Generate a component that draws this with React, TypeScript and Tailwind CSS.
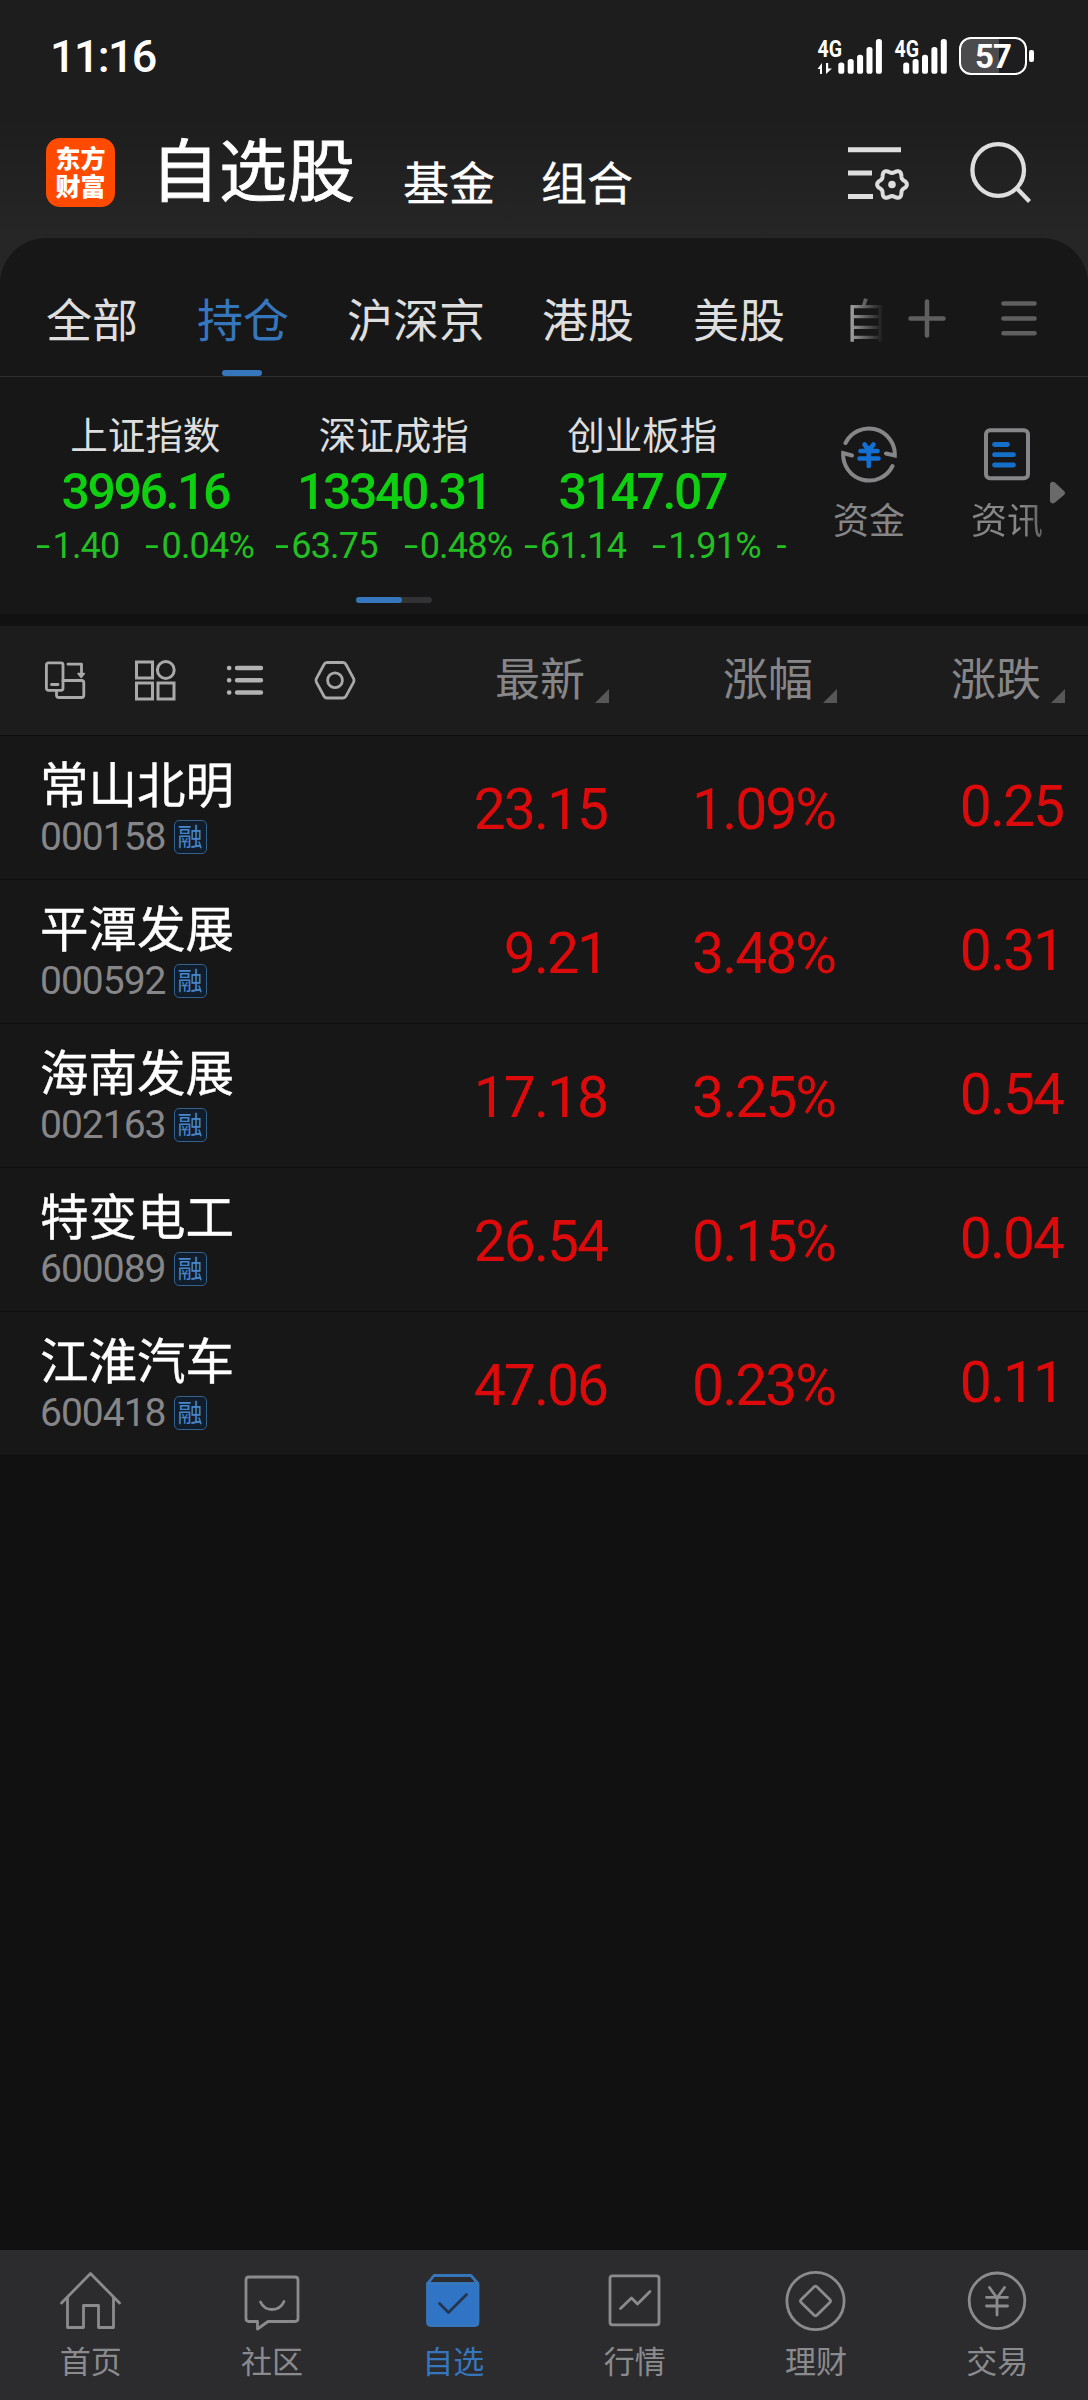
import type { ReactNode } from "react";

const indices = [
  { name: "上证指数", value: "3996.16", change: "1.40", percent: "0.04%" },
  { name: "深证成指", value: "13340.31", change: "63.75", percent: "0.48%" },
  { name: "创业板指", value: "3147.07", change: "61.14", percent: "1.91%" },
];

const stocks = [
  { name: "常山北明", code: "000158", price: "23.15", percent: "1.09%", change: "0.25" },
  { name: "平潭发展", code: "000592", price: "9.21", percent: "3.48%", change: "0.31" },
  { name: "海南发展", code: "002163", price: "17.18", percent: "3.25%", change: "0.54" },
  { name: "特变电工", code: "600089", price: "26.54", percent: "0.15%", change: "0.04" },
  { name: "江淮汽车", code: "600418", price: "47.06", percent: "0.23%", change: "0.11" },
];

// Контур шестерёнки с шестью зубцами
const gearPath =
  Array.from({ length: 72 }, (_, i) => {
    const a = (i / 72) * Math.PI * 2;
    const r = 13.2 + 1.7 * Math.cos(6 * a);
    return `${i ? "L" : "M"}${(46 + r * Math.cos(a)).toFixed(2)} ${(42.5 + r * Math.sin(a)).toFixed(2)}`;
  }).join("") + "Z";

function Signal({ arrows }: { arrows?: boolean }) {
  const start = arrows ? 21.3 : 9.2;
  const tops = [23.5, 20, 15.7, 8, 0];
  return (
    <svg className="overflow-visible" width={arrows ? 64 : 52} height="38" viewBox={arrows ? "0 0 64 38" : "0 0 52 38"} fill="#fff">
      <text x="0.5" y="18" fontSize="23" fontWeight="700" fontFamily="Roboto" textLength="24.5" lengthAdjust="spacingAndGlyphs">
        4G
      </text>
      {arrows && <path d="M0.5 30L5 24V35H3V30ZM9 24H11.2V29.5H15L9 35Z" />}
      {tops.map((top, i) => (
        <rect key={i} x={start + i * 9.4} y={top} width="6" height={34.8 - top} rx="2.6" />
      ))}
    </svg>
  );
}

function StatusBar() {
  return (
    <div className="flex h-[115px] items-start justify-between pl-[50px] pr-[54px] pt-[35px] text-white">
      <div className="text-[45px] font-medium leading-[44px] tracking-[-1.7px]">11:16</div>
      <div className="flex items-start pt-[4px]">
        <Signal arrows />
        <div className="w-[13px]" />
        <Signal />
        <div className="w-[13px]" />
        <div className="-mt-[2px] flex items-center">
          <div className="flex h-[38px] w-[68px] items-center justify-center rounded-[12px] border-[2.5px] border-white bg-[linear-gradient(90deg,#4b4b4d_60%,#1d1d1f_60%)] text-[33px] font-bold leading-none tracking-[-1px]">
            57
          </div>
          <div className="ml-[2px] h-[12px] w-[5px] rounded-[2px] bg-white" />
        </div>
      </div>
    </div>
  );
}

function Header() {
  return (
    <header className="flex h-[123px] items-start bg-gradient-to-b from-[#1d1d1e] to-[#262626] pl-[46px] text-white">
      <div className="mt-[23px] flex h-[69px] w-[69px] flex-none flex-col items-center justify-center rounded-[14px] bg-[#ff4a00] pt-[2px] text-[25px] font-black leading-[28px]">
        <span>东方</span>
        <span>财富</span>
      </div>
      <h1 className="ml-[36px] mt-[20px] w-[204px] flex-none whitespace-nowrap text-[68px] leading-[76px] [-webkit-text-stroke:0.8px_#fff]">自选股</h1>
      <span className="ml-[48px] mt-[41px] flex-none text-[46px] leading-[56px] [-webkit-text-stroke:0.3px_#fff]">基金</span>
      <span className="ml-[46px] mt-[41px] flex-none text-[46px] leading-[56px] [-webkit-text-stroke:0.3px_#fff]">组合</span>
      <svg className="ml-[213px] mt-[27px] flex-none" width="64" height="64" viewBox="0 0 64 64" fill="none" stroke="#dedede">
        <path d="M2 7.7H55M2 31H26M2 54.5H27" strokeWidth="5" />
        <path d={gearPath} strokeWidth="4" strokeLinejoin="round" />
        <circle cx="46" cy="42.5" r="3.8" fill="#dedede" stroke="none" />
      </svg>
      <svg className="ml-[58px] mt-[25px] flex-none" width="64" height="64" viewBox="0 0 64 64" fill="none" stroke="#dedede" strokeWidth="4.3">
        <circle cx="30.2" cy="30" r="25.8" />
        <path d="M48.5 48L61.5 61.5" />
      </svg>
    </header>
  );
}

function Tabs() {
  return (
    <div className="flex h-[139px] items-start border-b border-[#303032] pl-[46px] pt-[54px] text-[46px] leading-[58px] text-[#dedede]">
      <span className="w-[151px]">全部</span>
      <div className="flex w-[150px] flex-col text-[#3676bd]">
        <span>持仓</span>
        <div className="ml-[25px] mt-[20px] h-[6px] w-[40px] rounded-full bg-[#3676bd]" />
      </div>
      <span className="w-[195px]">沪深京</span>
      <span className="w-[151px]">港股</span>
      <span className="w-[150px]">美股</span>
      <span className="w-[46px] bg-gradient-to-r from-[#c4c4c4] to-[#171717] to-90% bg-clip-text text-transparent">自</span>
      <svg className="ml-[17px] mt-[6px]" width="42" height="42" viewBox="0 0 42 42" stroke="#5f5f60" strokeWidth="4.5" strokeLinecap="round">
        <path d="M4.5 20.5H37.5M21 3.5V37.5" />
      </svg>
      <svg className="ml-[50px] mt-[6px]" width="42" height="42" viewBox="0 0 42 42" stroke="#5f5f60" strokeWidth="4.6" strokeLinecap="round">
        <path d="M5.5 5.5H36.5M5.5 20.5H36.5M5.5 35.3H36.5" />
      </svg>
    </div>
  );
}

function Minus() {
  return <span className="inline-block w-[16px] origin-left scale-x-[1.4]">-</span>;
}

function IndexPanel() {
  return (
    <div className="flex h-[237px] items-start">
      <div className="flex w-[790px] flex-col">
        <div className="flex pl-[21px] pt-[33px]">
          {indices.map((item) => (
            <div key={item.name} className="flex w-[248.5px] flex-none flex-col items-center whitespace-nowrap">
              <span className="text-[37.5px] leading-[52px] text-[#dedede]">{item.name}</span>
              <span className="mt-[1px] text-[50px] font-medium leading-[58px] tracking-[-2.4px] text-[#0fd010]">{item.value}</span>
              <div className="mt-[5px] flex gap-[26px] text-[36px] leading-[40px] tracking-[-0.8px] text-[#22c022]">
                <span><Minus />{item.change}</span>
                <span><Minus />{item.percent}</span>
              </div>
            </div>
          ))}
          <span className="mt-[116px] w-[13px] flex-none pl-[10px] text-[36px] leading-[40px] text-[#22c022]">-</span>
        </div>
        <div className="ml-[356px] mt-[31px] h-[6px] w-[76px] rounded-full bg-[#323234]">
          <div className="h-[6px] w-[46px] rounded-full bg-[#3676bd]" />
        </div>
      </div>
      <div className="ml-[34px] flex w-[90px] flex-col items-center pt-[47px] text-[#868688]">
        <svg width="60" height="60" viewBox="0 0 60 60" fill="none" stroke="#868688" strokeWidth="4" strokeLinecap="round">
          <path d="M6.5 19A26 26 0 0 1 55.8 31.5L47 29.5M53.5 42A26 26 0 0 1 4.2 29L13 31.5" />
          <path d="M25.5 20.5L29.8 26L34.5 20.5M21.5 27H38.5M20.5 34.5H39.5M29.8 26V42" stroke="#146fd2" strokeWidth="4.6" />
        </svg>
        <span className="mt-[16px] text-[36px] leading-[44px]">资金</span>
      </div>
      <div className="ml-[48px] flex w-[90px] flex-col items-center pt-[47px]">
        <svg width="60" height="60" viewBox="0 0 60 60" fill="none" stroke="#868688" strokeWidth="4" strokeLinecap="round">
          <rect x="9" y="6.3" width="42" height="48" rx="4" />
          <path d="M17.5 20.5H30.5M17.5 30.7H36.5M17.5 41H36.5" stroke="#146fc9" strokeWidth="4.8" />
        </svg>
        <span className="mt-[16px] bg-gradient-to-r from-[#868688] from-70% to-[#606062] bg-clip-text text-[36px] leading-[44px] text-transparent">资讯</span>
      </div>
      <svg className="-ml-[2px] mt-[104px]" width="16" height="24" viewBox="0 0 16 24" fill="#6a6a6b">
        <path d="M0 3Q1 -0.5 5 1.5L14 10Q16 12 14 14L5 21.5Q1 24 0 20Z" />
      </svg>
    </div>
  );
}

function SortLabel({ label }: { label: string }) {
  return (
    <div className="flex w-[228px] flex-none items-end justify-end text-[45px] leading-[56px] text-[#868688]">
      <span>{label}</span>
      <svg className="mb-[6px] ml-[10px]" width="14" height="14" viewBox="0 0 14 14" fill="#575758">
        <path d="M14 0V14H0Z" />
      </svg>
    </div>
  );
}

function TableHeader() {
  return (
    <div className="flex h-[110px] items-center border-b border-[#0d0d0d] bg-[#1c1c1c] pl-[44px]">
      <div className="flex w-[337px] flex-none gap-[48px]">
        <svg width="42" height="42" viewBox="0 0 42 42" fill="none" stroke="#a9a9a9" strokeWidth="2.8" strokeLinecap="round" strokeLinejoin="round">
          <rect x="2.4" y="2.8" width="16.6" height="27.5" rx="2" />
          <path d="M7.5 24.5H14M24 4.2H37.5V14M19 20.5H37.5Q39.8 20.5 39.8 22.8V35.2Q39.8 37.5 37.5 37.5H15Q12.5 37.5 12.5 35.2V30.5" />
          <path d="M34 13.5H40.3L37.2 17.5Z" fill="#a9a9a9" strokeWidth="1.5" />
        </svg>
        <svg width="42" height="42" viewBox="0 0 42 42" fill="none" stroke="#a9a9a9" strokeWidth="3">
          <rect x="2.5" y="2" width="16" height="16" />
          <circle cx="31.8" cy="10" r="8.4" />
          <rect x="2.5" y="23" width="16" height="16" />
          <rect x="24" y="23" width="16" height="16" />
        </svg>
        <svg width="42" height="42" viewBox="0 0 42 42" fill="none" stroke="#b2b2b2" strokeWidth="4.4" strokeLinecap="round">
          <path d="M5 8H5.3M13 8H37M5 20.3H5.3M13 20.3H37M5 32.5H5.3M13 32.5H37" />
        </svg>
        <svg width="42" height="42" viewBox="0 0 42 42" fill="none" stroke="#a9a9a9" strokeWidth="2.8" strokeLinejoin="round">
          <path d="M13 2.5H29Q31 2.5 32 4.5L39.5 18.3Q40.5 20.3 39.5 22.3L32 36.2Q31 38 29 38H13Q11 38 10 36.2L2.5 22.3Q1.5 20.3 2.5 18.3L10 4.5Q11 2.5 13 2.5Z" />
          <circle cx="21" cy="20.3" r="7.4" />
        </svg>
      </div>
      <SortLabel label="最新" />
      <SortLabel label="涨幅" />
      <SortLabel label="涨跌" />
    </div>
  );
}

function StockRow({ stock }: { stock: (typeof stocks)[number] }) {
  return (
    <div className="flex h-[144px] items-start border-b border-[#0f0f0f] bg-[#171717] pl-[40px] text-[57px] leading-[60px] tracking-[-2px] text-[#dc0a0a]">
      <div className="flex w-[240px] flex-none flex-col pt-[23px] tracking-normal">
        <span className="text-[48.5px] leading-[56px] text-white [-webkit-text-stroke:0.4px_#fff]">{stock.name}</span>
        <div className="flex items-center">
          <span className="text-[39px] leading-[44px] tracking-[-1px] text-[#868688]">{stock.code}</span>
          <span className="ml-[8px] flex h-[34px] w-[33px] items-center justify-center rounded-[5px] border border-[#34628f] bg-[#111d2a] text-[25px] leading-none text-[#4685cb]">
            融
          </span>
        </div>
      </div>
      <span className="w-[327px] flex-none pt-[44px] text-right">{stock.price}</span>
      <span className="w-[228px] flex-none pt-[44px] text-right">{stock.percent}</span>
      <span className="w-[228px] flex-none pt-[41px] text-right">{stock.change}</span>
    </div>
  );
}

function NavItem({ label, active, children }: { label: string; active?: boolean; children: ReactNode }) {
  return (
    <div className={active ? "flex flex-1 flex-col items-center text-[#3676bd]" : "flex flex-1 flex-col items-center text-[#8b8b8e]"}>
      <svg width="64" height="64" viewBox="0 0 64 64" fill="none" stroke="currentColor" strokeWidth="2.8" strokeLinecap="round" strokeLinejoin="round">
        {children}
      </svg>
      <span className="mt-[10px] text-[31px] leading-[40px]">{label}</span>
    </div>
  );
}

function BottomNav() {
  return (
    <nav className="flex h-[150px] bg-[#2c2c2e] pt-[19px]">
      <NavItem label="首页">
        <path d="M2.5 34L31.5 4.5L60.5 34M8.5 28.5V58.5H24.5V36.5H39.5V58.5H54.5V28.5" />
      </NavItem>
      <NavItem label="社区">
        <path d="M9 8H55Q58 8 58 11V49.5Q58 52.5 55 52.5H28L17.5 60V52.5H9Q6 52.5 6 49.5V11Q6 8 9 8Z" />
        <path d="M20.5 33Q24 40.5 32 40.5Q40.5 40.5 44 32.5" />
      </NavItem>
      <NavItem label="自选" active>
        <path d="M7 14L13 6.5H50L56.5 14" />
        <path d="M6.5 14.5H57V53Q57 56.5 53.5 56.5H10Q6.5 56.5 6.5 53Z" fill="#3074c6" />
        <path d="M18.5 34.5L27.5 43.5L45.5 25.5" stroke="#24364d" />
      </NavItem>
      <NavItem label="行情">
        <rect x="7" y="6.8" width="49" height="49" rx="2.5" />
        <path d="M17.5 39.5L28.5 29L34.5 35L47 22.5" />
      </NavItem>
      <NavItem label="理财">
        <circle cx="31.5" cy="32" r="28.6" />
        <path d="M30.2 17.8Q31.5 16.6 32.8 17.8L45.8 30.5Q47.2 32 45.8 33.5L32.8 46.2Q31.5 47.4 30.2 46.2L17.2 33.5Q15.8 32 17.2 30.5Z" />
      </NavItem>
      <NavItem label="交易">
        <circle cx="32" cy="31.8" r="27.8" />
        <path d="M24.5 18.5L32 29L39.5 18.5M21.5 28.3H42.5M21.5 37H42.5M32 29V46" />
      </NavItem>
    </nav>
  );
}

export default function App() {
  return (
    <div className="flex h-[2400px] w-[1088px] flex-col overflow-hidden bg-[#111111] font-['Roboto','Noto_Sans_CJK_SC',sans-serif]">
      <div className="bg-[#1d1d1e]">
        <StatusBar />
        <Header />
      </div>
      <div className="bg-[#262626]">
        <div className="h-[376px] rounded-t-[46px] bg-[#171717]">
          <Tabs />
          <IndexPanel />
        </div>
      </div>
      <div className="h-[12px] flex-none bg-[#111111]" />
      <TableHeader />
      {stocks.map((stock) => (
        <StockRow key={stock.code} stock={stock} />
      ))}
      <div className="flex-1" />
      <BottomNav />
    </div>
  );
}
